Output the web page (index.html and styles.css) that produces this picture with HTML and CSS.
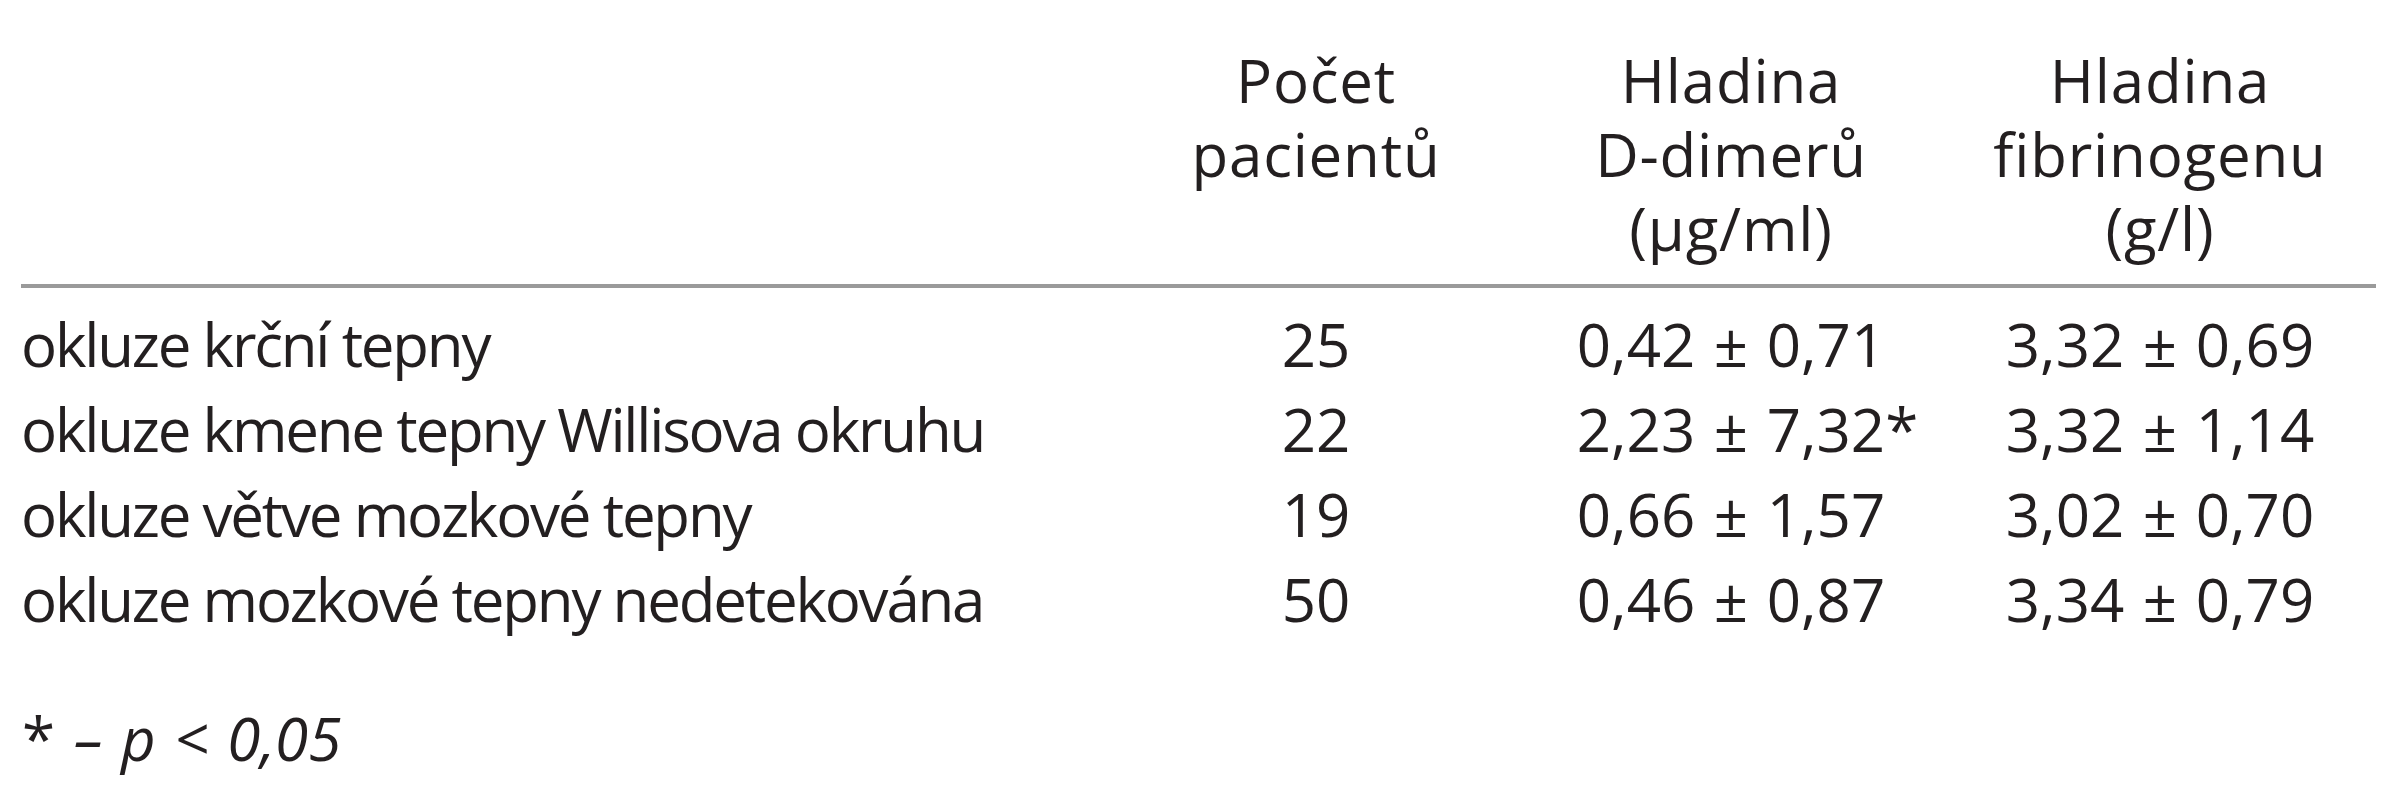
FILE: index.html
```html
<!DOCTYPE html>
<html lang="cs">
<head>
<meta charset="utf-8">
<title>Tabulka</title>
<link rel="stylesheet" href="styles.css">
</head>
<body>
<div class="sheet">
  <table class="data">
    <colgroup>
      <col class="c-label">
      <col class="c-count">
      <col class="c-dd">
      <col class="c-fib">
    </colgroup>
    <thead>
      <tr>
        <th class="h-label"></th>
        <th>Počet<br>pacientů</th>
        <th>Hladina<br>D-dimerů<br>(µg/ml)</th>
        <th>Hladina<br>fibrinogenu<br>(g/l)</th>
      </tr>
    </thead>
    <tbody>
      <tr class="first">
        <td class="label">okluze krční tepny</td>
        <td class="num">25</td>
        <td class="num">0,42 ± 0,71</td>
        <td class="num">3,32 ± 0,69</td>
      </tr>
      <tr>
        <td class="label">okluze kmene tepny Willisova okruhu</td>
        <td class="num">22</td>
        <td class="num">2,23 ± 7,32<span class="sig">*</span></td>
        <td class="num">3,32 ± 1,14</td>
      </tr>
      <tr>
        <td class="label">okluze větve mozkové tepny</td>
        <td class="num">19</td>
        <td class="num">0,66 ± 1,57</td>
        <td class="num">3,02 ± 0,70</td>
      </tr>
      <tr>
        <td class="label">okluze mozkové tepny nedetekována</td>
        <td class="num">50</td>
        <td class="num">0,46 ± 0,87</td>
        <td class="num">3,34 ± 0,79</td>
      </tr>
    </tbody>
  </table>
  <p class="note"><span class="note-star">*</span> – p &lt; 0,05</p>
</div>
</body>
</html>
```

FILE: styles.css
```css
html, body {
  margin: 0;
  padding: 0;
  background: #ffffff;
}

body {
  font-family: "Open Sans", "Noto Sans", sans-serif;
  font-size: 60px;
  color: #231f20;
}

.sheet {
  margin-left: 21px;
  width: 2355px;
  padding-top: 43px;
}

.data {
  width: 2355px;
  table-layout: fixed;
  border-collapse: collapse;
  border-spacing: 0;
}

.c-label { width: 1093px; }
.c-count { width: 404px; }
.c-dd { width: 426px; }
.c-fib { width: 432px; }

.data th {
  font-weight: normal;
  text-align: center;
  vertical-align: top;
  line-height: 74px;
  letter-spacing: 0.8px;
  padding: 0 0 19px 0;
  border-bottom: 4px solid #9a9a9a;
  white-space: nowrap;
}

.data td {
  text-align: center;
  line-height: 85px;
  padding: 0;
  white-space: nowrap;
}

.data tr.first td {
  padding-top: 14px;
}

.data td.label {
  text-align: left;
  letter-spacing: -2.2px;
}

.data td.num {
  word-spacing: 3px;
}

.sig {
  margin-right: -0.55em;
}

.note {
  margin: 54px 0 0 1px;
  font-style: italic;
  line-height: 85px;
  word-spacing: 3px;
}

.note-star {
  font-style: normal;
}
```
